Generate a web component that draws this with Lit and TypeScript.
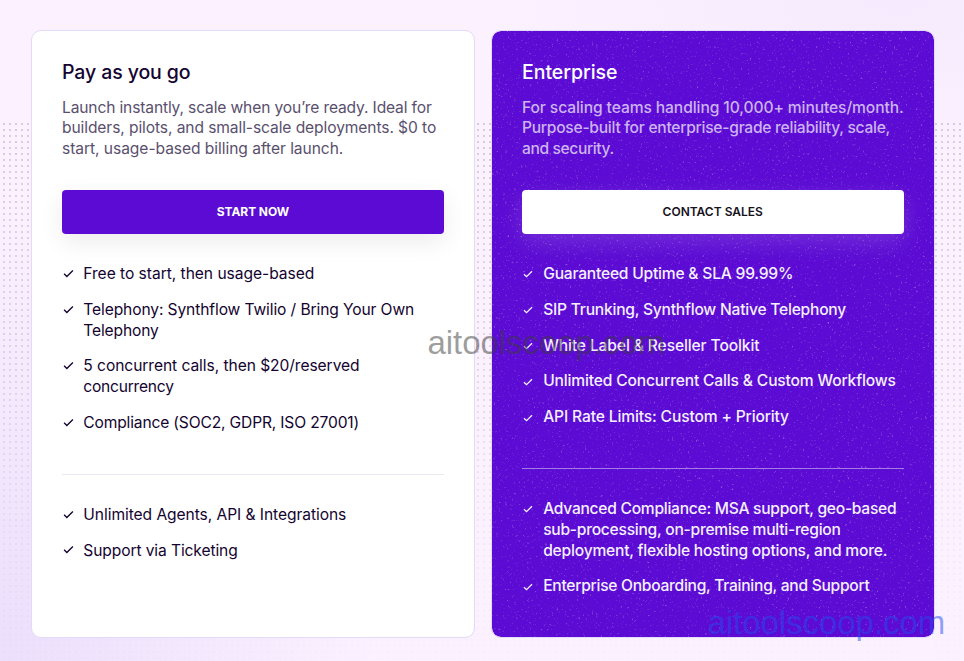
import { LitElement, html, css } from "lit";
import { customElement, property } from "lit/decorators.js";
import { styleMap } from "lit/directives/style-map.js";
import { classMap } from "lit/directives/class-map.js";

/* A line of copy and its tracking in px. */
type Line = [text: string, tracking: number];

interface Plan {
  name: Line;
  dark: boolean;
  blurb: Line[];
  action: string;
  core: Line[][];
  extra: Line[][];
}

const plans: Plan[] = [
  {
    name: ["Pay as you go", -0.1],
    dark: false,
    blurb: [
      ["Launch instantly, scale when you’re ready. Ideal for", -0.15],
      ["builders, pilots, and small-scale deployments. $0 to", -0.1],
      ["start, usage-based billing after launch.", -0.06],
    ],
    action: "START NOW",
    core: [
      [["Free to start, then usage-based", -0.04]],
      [["Telephony: Synthflow Twilio / Bring Your Own", -0.115], ["Telephony", -0.15]],
      [["5 concurrent calls, then $20/reserved", -0.065], ["concurrency", -0.24]],
      [["Compliance (SOC2, GDPR, ISO 27001)", -0.165]],
    ],
    extra: [
      [["Unlimited Agents, API & Integrations", -0.07]],
      [["Support via Ticketing", -0.11]],
    ],
  },
  {
    name: ["Enterprise", -0.05],
    dark: true,
    blurb: [
      ["For scaling teams handling 10,000+ minutes/month.", -0.09],
      ["Purpose-built for enterprise-grade reliability, scale,", -0.26],
      ["and security.", -0.38],
    ],
    action: "CONTACT SALES",
    core: [
      [["Guaranteed Uptime & SLA 99.99%", -0.21]],
      [["SIP Trunking, Synthflow Native Telephony", -0.225]],
      [["White Label & Reseller Toolkit", -0.12]],
      [["Unlimited Concurrent Calls & Custom Workflows", -0.16]],
      [["API Rate Limits: Custom + Priority", -0.14]],
    ],
    extra: [
      [
        ["Advanced Compliance: MSA support, geo-based", -0.27],
        ["sub-processing, on-premise multi-region", -0.25],
        ["deployment, flexible hosting options, and more.", -0.21],
      ],
      [["Enterprise Onboarding, Training, and Support", -0.27]],
    ],
  },
];

const line = ([text, tracking]: Line) =>
  html`<span class="line" style=${styleMap({ letterSpacing: `${tracking}px` })}>${text}</span>`;

@customElement("plan-card")
export class PlanCard extends LitElement {
  static styles = css`
    :host {
      display: block;
      min-width: 0;
    }
    .card {
      position: relative;
      box-sizing: border-box;
      height: 100%;
      padding: 29px 30px 30px;
      border: 1px solid #e2daf6;
      border-radius: 10px;
      background: #fff;
      color: #14042f;
      font: 400 15.6px/20.8px Inter, "Open Sans", sans-serif;
      overflow: hidden;
    }
    .dark {
      background: #5b0bd3;
      background-clip: padding-box;
      color: #f6f0ff;
      font-weight: 450;
    }
    .grain {
      position: absolute;
      inset: 0;
      width: 100%;
      height: 100%;
    }
    .body {
      position: relative;
    }
    .line {
      display: block;
      white-space: nowrap;
    }
    h2 {
      margin: 0 0 13.6px;
      font-size: 19.5px;
      line-height: 24px;
      font-weight: 500;
    }
    .dark h2 {
      color: #fff;
    }
    .blurb {
      margin: 0 0 30px;
      color: #5a506e;
    }
    .dark .blurb {
      color: #cdb3f0;
    }
    button {
      display: block;
      width: 100%;
      height: 44px;
      margin: 0 0 30px;
      padding: 0;
      border: 0;
      border-radius: 4px;
      background: #5b0bd3;
      color: #fff;
      font: 700 12px/44px Inter, sans-serif;
      letter-spacing: -0.08px;
      box-shadow: 0 8px 24px rgba(0, 0, 0, 0.08);
    }
    .dark button {
      background: #fff;
      color: #16121c;
      font-weight: 600;
      letter-spacing: 0;
      box-shadow: 0 8px 24px rgba(255, 255, 255, 0.15);
    }
    ul {
      display: grid;
      gap: 15px;
      margin: 0;
      padding: 0;
      list-style: none;
    }
    li {
      display: flex;
    }
    .check {
      flex: none;
      width: 11px;
      height: 11px;
      margin: 3.8px 9.8px 0 0.5px;
      fill: none;
      stroke: currentColor;
      stroke-width: 1.5;
    }
    .dark .check {
      width: 10px;
      height: 10px;
      margin: 5.4px 10px 0 1.2px;
      stroke-width: 1.6;
    }
    hr {
      height: 1px;
      margin: 39.8px 0 30.2px;
      border: 0;
      background: #ebe7f5;
    }
    .dark hr {
      background: #a67be6;
    }
  `;

  @property({ attribute: false }) plan!: Plan;

  private list(items: Line[][]) {
    return html`<ul>
      ${items.map(
        (lines) => html`<li>
          <svg class="check" viewBox="0 0 12 12"><path d="M1.2 6.3 4.2 9.2 10.8 2.7" /></svg>
          <div>${lines.map(line)}</div>
        </li>`
      )}
    </ul>`;
  }

  render() {
    const { name, dark, blurb, action, core, extra } = this.plan;
    return html`<section class=${classMap({ card: true, dark })}>
      ${dark
        ? html`<svg class="grain" aria-hidden="true">
            <filter id="specks" x="0" y="0" width="100%" height="100%" color-interpolation-filters="sRGB">
              <feTurbulence type="fractalNoise" baseFrequency="0.45" numOctaves="2" seed="7" />
              <feColorMatrix values="0 0 0 0 0.74  0 0 0 0 0.56  0 0 0 0 0.86  2.2 0 0 0 -1.4" />
            </filter>
            <rect width="100%" height="100%" filter="url(#specks)" />
          </svg>`
        : null}
      <div class="body">
        <h2>${line(name)}</h2>
        <p class="blurb">${blurb.map(line)}</p>
        <button>${action}</button>
        ${this.list(core)}
        <hr />
        ${this.list(extra)}
      </div>
    </section>`;
  }
}

@customElement("app-root")
export class AppRoot extends LitElement {
  static styles = css`
    :host {
      position: relative;
      display: block;
      box-sizing: border-box;
      height: 661px;
      padding: 30px 29.5px 23.5px 31px;
      overflow: hidden;
      background:
        radial-gradient(ellipse 380px 440px at 0 640px, rgba(235, 223, 252, 1), rgba(235, 223, 252, 0) 100%),
        radial-gradient(ellipse 420px 160px at 900px 0, rgba(245, 234, 253, 0.9), rgba(245, 234, 253, 0) 100%),
        #fcf1ff;
    }
    :host::before,
    :host::after {
      content: "";
      position: absolute;
      top: 123px;
      bottom: 0;
      background: conic-gradient(from 270deg at 2px 2px, rgba(85, 80, 95, 0.22) 90deg, transparent 0) 0 0 / 6px 6px;
      mask-image: linear-gradient(#000, rgba(0, 0, 0, 0.7) 45%, rgba(0, 0, 0, 0.2) 80%, rgba(0, 0, 0, 0.06));
    }
    :host::before {
      left: 3px;
      width: 900px;
    }
    :host::after {
      left: 935px;
      right: 0;
    }
    .plans {
      position: relative;
      display: grid;
      grid-template-columns: 444px 1fr;
      gap: 16px;
      height: 100%;
    }
    .mark {
      position: absolute;
      font: 33px/38px "Liberation Sans", Arial, sans-serif;
      letter-spacing: -0.05px;
      pointer-events: none;
    }
    .middle {
      left: 427.5px;
      top: 324px;
      color: rgba(60, 60, 60, 0.5);
    }
    .corner {
      left: 707.5px;
      top: 604px;
      color: rgba(35, 75, 240, 0.5);
    }
  `;

  render() {
    return html`
      <main class="plans">${plans.map((plan) => html`<plan-card .plan=${plan}></plan-card>`)}</main>
      <div class="mark middle">aitoolscoop.com</div>
      <div class="mark corner">aitoolscoop.com</div>
    `;
  }
}
